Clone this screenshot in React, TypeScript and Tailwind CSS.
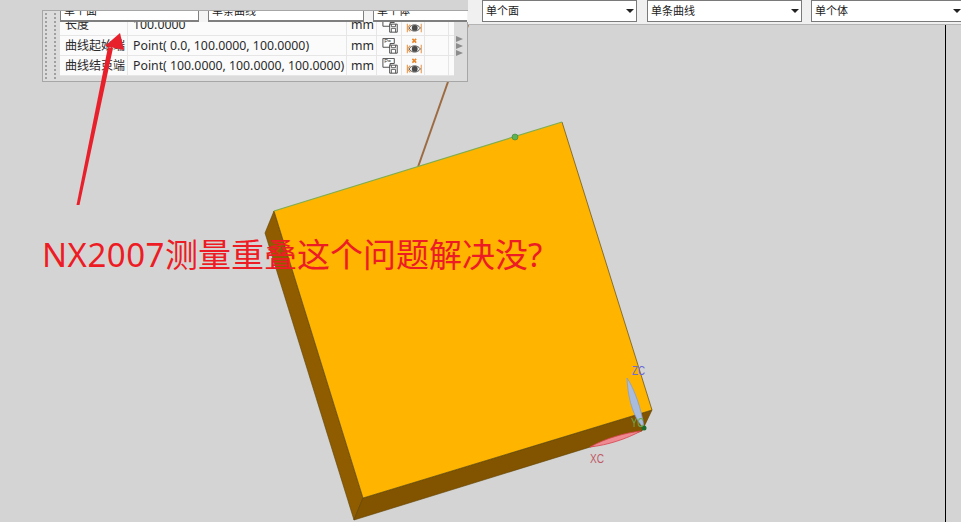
import React from "react";

const cjk = "font-['Noto_Sans','Noto_Sans_CJK_SC',sans-serif]";

function Caret() {
  return <span className="ml-auto mr-[2px] h-0 w-0 border-x-[4px] border-t-[4px] border-x-transparent border-t-[#222]" />;
}

function TopSelect({ label, className }: { label: string; className: string }) {
  return (
    <div className={`flex h-[22px] shrink-0 items-center border border-[#7a7a7a] bg-white pl-[3px] text-[11px] text-[#222] ${className}`}>
      <span>{label}</span>
      <Caret />
    </div>
  );
}

function InnerSelect({ label, className }: { label: string; className: string }) {
  return (
    <div className={`flex h-[11px] shrink-0 items-end overflow-hidden border-x border-b-2 border-[#7f7f7f] bg-white pb-[3px] pl-[3px] text-[11px] leading-[12px] text-[#222] ${className}`}>
      <span>{label}</span>
    </div>
  );
}

function FormatIcon() {
  return (
    <svg width="17" height="16" viewBox="0 0 19 19" fill="none" stroke="#444" strokeWidth="1.100" className="shrink-0">
      <path d="M0.500 0.500h13.500v6h-5v4.500h-8.500z" fill="#fff" />
      <text x="2" y="6.500" fontSize="6.500" fontFamily="Liberation Sans" fill="#333" stroke="none">P=</text>
      <path d="M8.500 8.500h9v9.500h-9z" fill="#fff" />
      <path d="M10.500 8.500v3h5v-3M10.500 18v-4.500h5v4.500" stroke="#555" />
    </svg>
  );
}

function EyeIcon() {
  return (
    <svg width="17" height="16" viewBox="0 0 19 19" fill="none" className="shrink-0">
      <path d="M7 1l4.500 4.500M11.500 1l-4.500 4.500" stroke="#e8842a" strokeWidth="1.800" />
      <path d="M1 8v10M1 13l3.500-4M1 13l3.500 4M17.500 8v10" stroke="#eb9a4e" strokeWidth="1.300" />
      <path d="M3 13c3-5 10-5 13.500 0c-3.500 5-10.500 5-13.500 0z" fill="#eeeeee" stroke="#555" strokeWidth="1.100" />
      <circle cx="9.800" cy="13" r="3.400" fill="#4a4a4a" />
    </svg>
  );
}

function Row({ name, value, clipped }: { name: string; value: string; clipped?: boolean }) {
  const cell = "flex h-[20px] shrink-0 items-center border-r border-[#e6e6e6]";
  return (
    <div className={`flex border-b border-[#e6e6e6] ${clipped ? "h-[14px] items-end overflow-hidden" : "h-[20px]"}`}>
      <div className={`${cell} w-[68px] overflow-hidden whitespace-nowrap pl-[5px] text-[12px]`}>{name}</div>
      <div className={`${cell} w-[219px] whitespace-nowrap pl-[5px]`}>{value}</div>
      <div className={`${cell} w-[30px] pl-[4px]`}>mm</div>
      <div className={`${cell} w-[25px] pl-[5px]`}><FormatIcon /></div>
      <div className={`${cell} w-[23px] pl-[4px]`}><EyeIcon /></div>
      <div className={`${cell} w-[24px]`} />
    </div>
  );
}

export default function App() {
  return (
    <div className={`relative flex h-[522px] w-[961px] flex-col overflow-hidden bg-[#d4d4d4] ${cjk}`}>
      <div className="ml-[468px] flex h-[25px] shrink-0 gap-[10px] border-b border-[#b4b4b4] bg-[#f0f0f0] pl-[14px]">
        <TopSelect label="单个面" className="w-[155px]" />
        <TopSelect label="单条曲线" className="w-[155px]" />
        <TopSelect label="单个体" className="-ml-[1px] w-[153px]" />
      </div>
      <div className="w-[946px] flex-1 border-r border-black" />

      <svg className="absolute left-0 top-0" width="961" height="522" viewBox="0 0 961 522" fill="none">
        <path d="M468 25L418 167" stroke="#9c6b42" strokeWidth="2" />
        <path d="M274 211L265 233L354 520L363 498Z" fill="#8f5c00" stroke="#5f4200" strokeWidth="0.600" />
        <path d="M363 498L652 410L642 431L354 520Z" fill="#835400" stroke="#5f4200" strokeWidth="0.600" />
        <path d="M274 211L562 122L652 410L363 498Z" fill="#ffb400" />
        <path d="M562 122L652 410L363 498L274 211" stroke="#5f4a10" strokeWidth="0.700" />
        <path d="M274 211L562 122" stroke="#7fae4e" strokeWidth="1.200" />
        <circle cx="515" cy="137" r="3" fill="#5cb255" stroke="#3f7f3a" strokeWidth="0.600" />
        <path d="M627 378C634 388 642 410 644 428C635 420 628 402 627 378Z" fill="#a9bcdc" stroke="#7f9ad0" strokeWidth="0.700" />
        <path d="M590 447C606 438 625 433 641 431C626 439 608 445 590 447Z" fill="#ee8a92" stroke="#d9414c" strokeWidth="0.800" />
        <circle cx="644" cy="428" r="2.500" fill="#1c6a2e" />
        <text x="632" y="375" fontSize="13" textLength="13" lengthAdjust="spacingAndGlyphs" fontFamily="Liberation Sans" fill="#6a6ad8">ZC</text>
        <text x="631" y="427" fontSize="13" textLength="13" lengthAdjust="spacingAndGlyphs" fontFamily="Liberation Sans" fill="#6aa84f">YC</text>
        <text x="590" y="463" fontSize="13" textLength="14" lengthAdjust="spacingAndGlyphs" fontFamily="Liberation Sans" fill="#c05a66">XC</text>
      </svg>

      <div className="absolute left-[42px] top-[10px] flex h-[72px] w-[426px] border border-[#a6a6a6] bg-[#dcdcdc] text-[12.300px] leading-[18px] text-[#2a2a2a]">
        <div className="grid w-[17px] shrink-0 grid-cols-2 content-start gap-[2px] pl-[2px] pt-[2px]">
          {Array.from({ length: 34 }).map((_, i) => (
            <span key={i} className="h-[2px] w-[2px] bg-[#a0a0a0]" />
          ))}
        </div>
        <div className="flex w-[408px] shrink-0 flex-col">
          <div className="relative z-10 flex h-[11px] gap-[9px] bg-[#f4f4f4]">
            <InnerSelect label="单个面" className="w-[139px]" />
            <InnerSelect label="单条曲线" className="w-[156px]" />
            <InnerSelect label="单个体" className="w-[94px] border-r-0" />
          </div>
          <div className="flex items-start">
            <div className="w-[394px] shrink-0 bg-[#fbfbfb]">
              <Row name="长度" value="100.0000" clipped />
              <Row name="曲线起始端" value="Point( 0.0, 100.0000, 100.0000)" />
              <Row name="曲线结束端" value="Point( 100.0000, 100.0000, 100.0000)" />
            </div>
            <div className="ml-[2px] mt-[14px] flex flex-col gap-[1px]">
              {[0, 1, 2].map((i) => (
                <span key={i} className="h-0 w-0 border-y-[3px] border-l-[7px] border-y-transparent border-l-[#8c8c8c]" />
              ))}
            </div>
          </div>
        </div>
      </div>

      <svg className="absolute left-0 top-0" width="961" height="522" viewBox="0 0 961 522" fill="none">
        <path d="M76.500 205L79.500 205L113 48L108 47Z" fill="#e8202c" />
        <path d="M120 33L105 46L124 50Z" fill="#e8202c" />
      </svg>

      <div className="absolute left-[42px] top-[233px] whitespace-nowrap text-[33px] leading-[44px] text-[#ed1c24]">
        <span className="tracking-[0.5px]">NX2007</span>测量重叠这个问题解决没?
      </div>
    </div>
  );
}
